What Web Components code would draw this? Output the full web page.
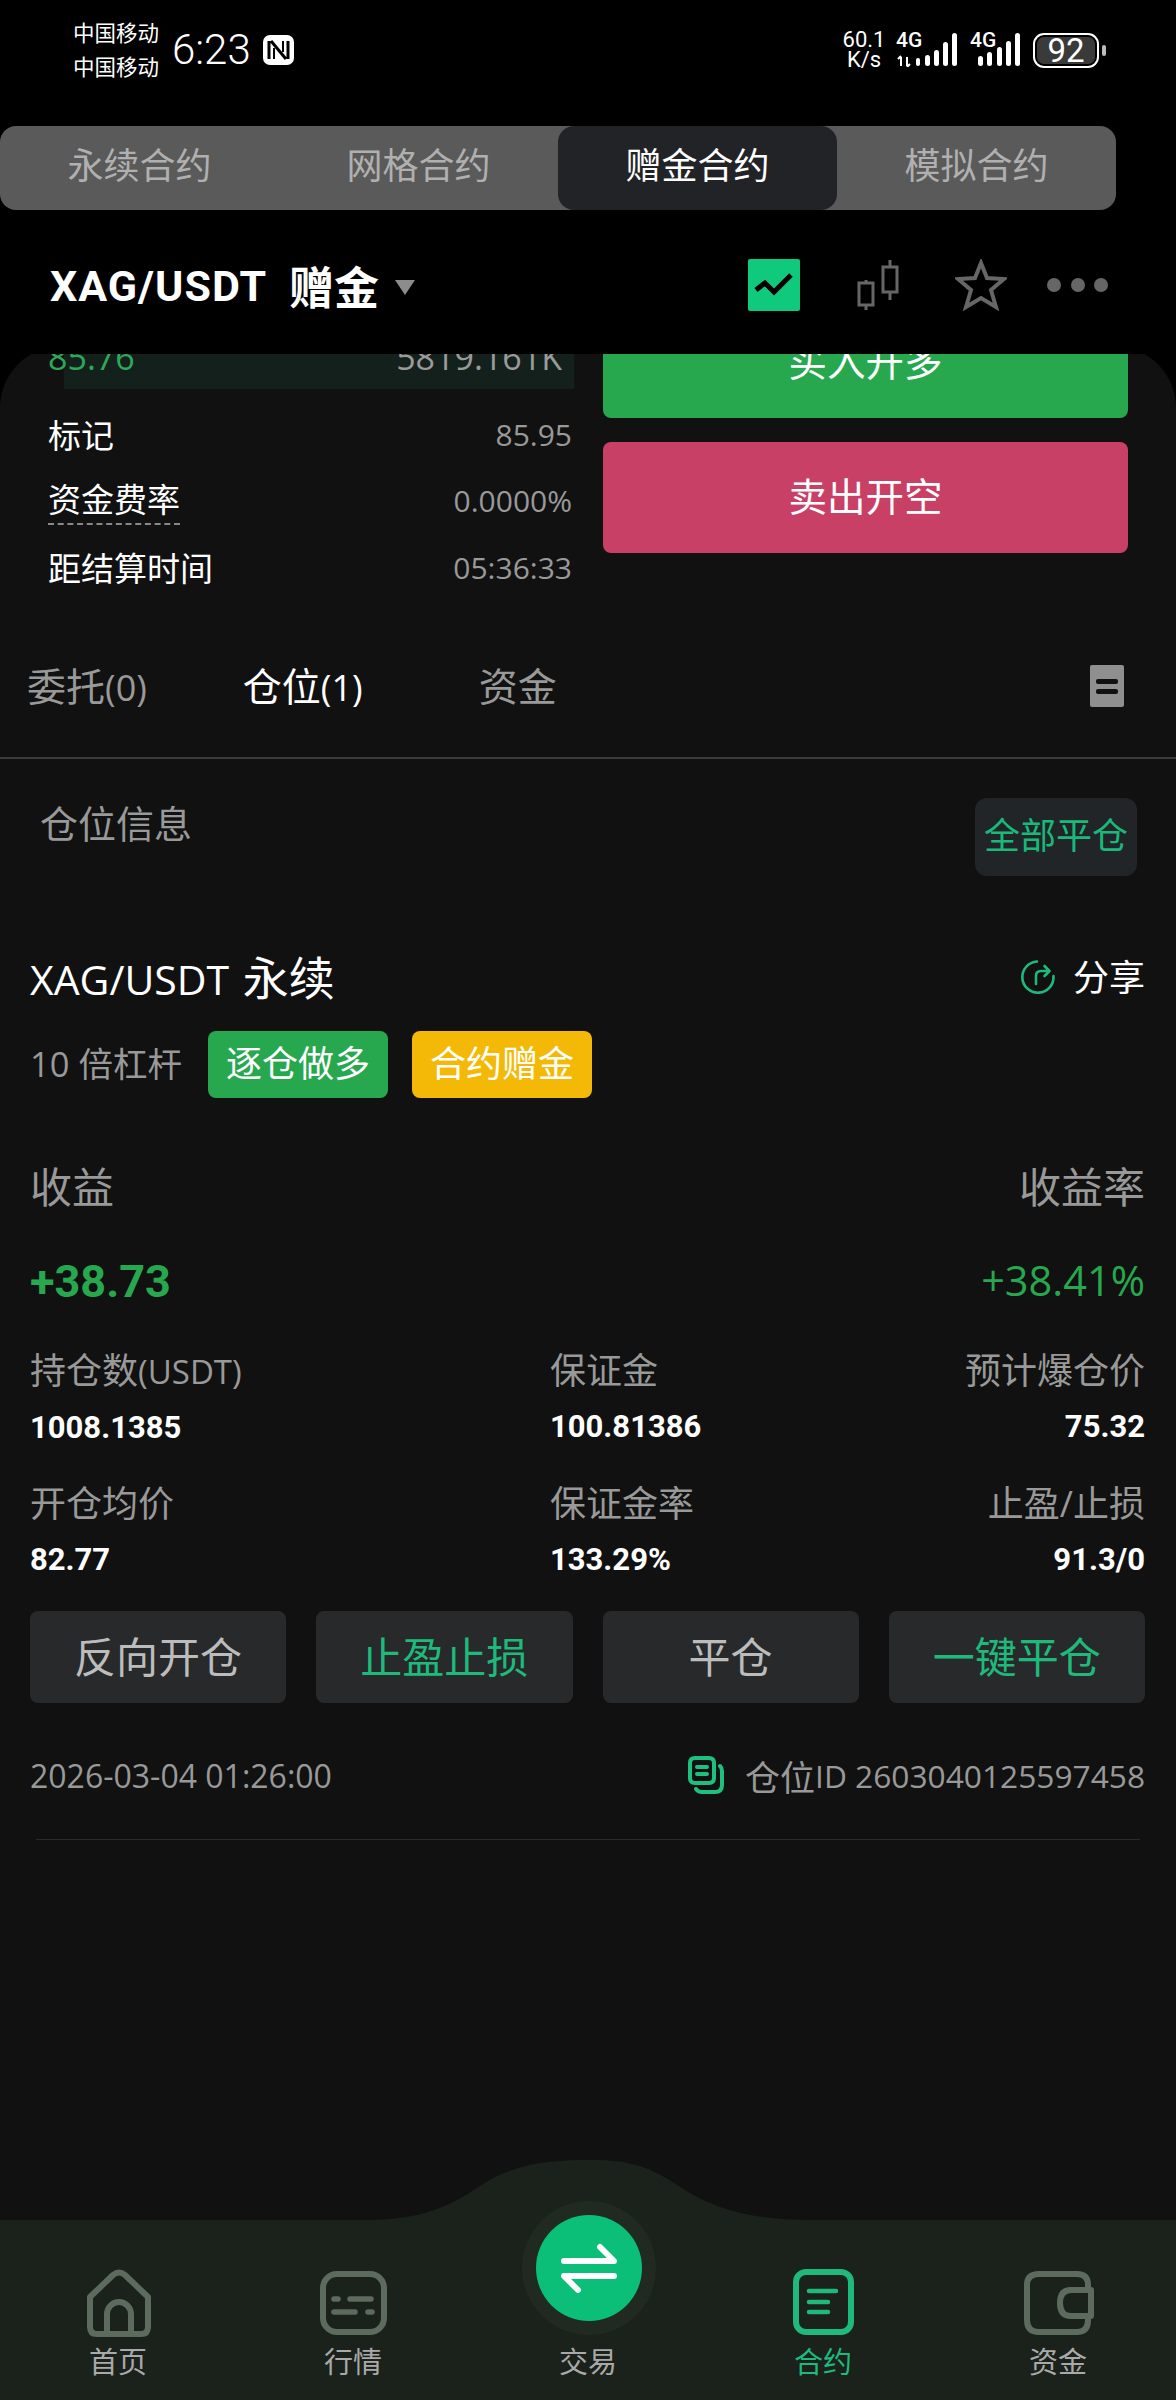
<!DOCTYPE html>
<html lang="zh-CN">
<head>
<meta charset="utf-8">
<title>XAG/USDT</title>
<style>
  html, body { margin: 0; background: #000; }
  body {
    width: 1176px; height: 2400px; overflow: hidden;
    display: flex; flex-direction: column;
    font-family: "Open Sans", "Noto Sans CJK SC", sans-serif;
    color: #fff;
  }
  position-sheet { flex: 1; min-height: 0; }
</style>
</head>
<body>
<status-bar></status-bar>
<market-tabs>
  <tab-item>永续合约</tab-item>
  <tab-item>网格合约</tab-item>
  <tab-item active>赠金合约</tab-item>
  <tab-item>模拟合约</tab-item>
</market-tabs>
<pair-header></pair-header>

<position-sheet>
  <order-panel></order-panel>
  <record-tabs></record-tabs>
  <position-card></position-card>
</position-sheet>

<bottom-nav>
  <nav-item label="首页">
    <svg slot="icon" width="69" height="70" viewBox="0 0 69 70" fill="none" stroke="#5d6a5e" stroke-width="6" stroke-linejoin="round"><path d="M6 29 L29 7 Q35 2 41 7 L64 29 V59 Q64 66 57 66 H13 Q6 66 6 59 Z"/><path d="M23 65 V46 A12 12 0 0 1 47 46 V65"/></svg>
  </nav-item>
  <nav-item label="行情">
    <svg slot="icon" width="69" height="70" viewBox="0 0 69 70" fill="none" stroke="#5d6a5e" stroke-width="6" stroke-linecap="round"><rect x="4" y="6" width="61" height="58" rx="14"/><path d="M15 31 H19 M31 31 H52 M15 44 H36 M49 44 H53" stroke-width="5.5"/></svg>
  </nav-item>
  <nav-item label="交易"><span slot="icon"></span></nav-item>
  <nav-item label="合约" active>
    <svg slot="icon" width="69" height="70" viewBox="0 0 69 70" fill="none" stroke="#1fb97c" stroke-width="6" stroke-linecap="round"><rect x="7" y="4" width="55" height="60" rx="10"/><path d="M20 23 H47 M20 34 H39 M20 44 H39" stroke-width="4.5"/></svg>
  </nav-item>
  <nav-item label="资金">
    <svg slot="icon" width="72" height="70" viewBox="0 0 72 70" fill="none" stroke="#5d6a5e" stroke-width="6" stroke-linejoin="round"><path d="M66 22 V17 Q66 6 55 6 H17 Q5 6 5 17 V52 Q5 64 17 64 H55 Q66 64 66 52 V48"/><path d="M69 22 H49 Q38 22 38 35 Q38 48 49 48 H69 Z"/></svg>
  </nav-item>
</bottom-nav>

<script>
class StatusBar extends HTMLElement {
    connectedCallback() {
        this.attachShadow({ mode: 'open' });
        this.shadowRoot.innerHTML = `
            <style>
                :host { display: block; height: 126px; background: #000; }
                .bar { height: 100px; display: flex; align-items: center; padding: 0 0 0 73px; }
                .carrier { font-size: 21.5px; line-height: 34px; width: 99px; }
                .time { font-family: Roboto, sans-serif; font-weight: 300; font-size: 42px; line-height: 50px; width: 91px; }
                .nfc { display: block; }
                .right { margin-left: auto; display: flex; align-items: center; padding-right: 70px; }
                .speed { font-family: Roboto, sans-serif; font-size: 22px; line-height: 20px; text-align: center; width: 44px; margin-right: 10px; }
                .sig { position: relative; height: 34px; }
                .sig span { position: absolute; left: 0; top: -5px; font-family: Roboto, sans-serif; font-size: 21px; font-weight: 500; line-height: 25px; }
                .sig svg { display: block; }
                .battery { box-sizing: border-box; width: 66px; height: 35px; border: 2.5px solid #fff; border-radius: 11px; padding: 2px; margin-left: 13px; }
                .battery span { display: block; height: 100%; background: #3a3a3a; border-radius: 7px; text-align: center; font-family: Roboto, sans-serif; font-size: 33px; line-height: 27px; font-weight: 400; }
                .tip { width: 4px; height: 11px; background: #bbb; border-radius: 2px; margin-left: 3px; }
            </style>
            <div class="bar">
                <div class="carrier">中国移动<br>中国移动</div>
                <div class="time">6:23</div>
                <svg class="nfc" width="31" height="30" viewBox="0 0 31 30"><rect width="31" height="30" rx="7" fill="#fff"/><path d="M6 24 V6 M25 6 V24 M8 6 L23 24" fill="none" stroke="#000" stroke-width="3"/><path d="M11 13 V24 M20 6 V17" fill="none" stroke="#000" stroke-width="2"/></svg>
                <div class="right">
                    <div class="speed">60.1<br>K/s</div>
                    <div class="sig">
                        <span>4G</span>
                        <svg width="64" height="34" viewBox="0 0 64 34" fill="#fff">
                            <path d="M5 24 V33 M11 24 V33 M2 26 L5 23 M14 31 L11 34" stroke="#fff" stroke-width="2" fill="none"/>
                            <rect x="20" y="25" width="4" height="8" rx="2"/><rect x="29" y="22" width="5" height="11" rx="2.5"/><rect x="38" y="17" width="5" height="16" rx="2.5"/><rect x="47" y="9" width="5" height="24" rx="2.5"/><rect x="56" y="0" width="5" height="33" rx="2.5"/>
                        </svg>
                    </div>
                    <div class="sig" style="margin-left:10px">
                        <span>4G</span>
                        <svg width="50" height="34" viewBox="0 0 50 34" fill="#fff">
                            <rect x="8" y="23" width="5" height="10" rx="2.5"/><rect x="17" y="19" width="5" height="14" rx="2.5"/><rect x="27" y="14" width="5" height="19" rx="2.5"/><rect x="36" y="8" width="5" height="25" rx="2.5"/><rect x="45" y="0" width="5" height="33" rx="2.5"/>
                        </svg>
                    </div>
                    <div class="battery"><span>92</span></div>
                    <div class="tip"></div>
                </div>
            </div>
        `;
    }
}

class TabItem extends HTMLElement {
    connectedCallback() {
        this.attachShadow({ mode: 'open' });
        this.shadowRoot.innerHTML = `
            <style>
                :host { display: flex; align-items: center; justify-content: center; flex: 1; box-sizing: border-box; padding-bottom: 9px; font-size: 36px; color: #b0b0b0; border-radius: 16px; }
                :host([active]) { background: #222327; color: #fff; }
            </style>
            <slot></slot>
        `;
    }
}

class MarketTabs extends HTMLElement {
    connectedCallback() {
        this.attachShadow({ mode: 'open' });
        this.shadowRoot.innerHTML = `
            <style>
                :host { display: flex; width: 1116px; height: 84px; background: #5a5a5a; border-radius: 16px; }
            </style>
            <slot></slot>
        `;
    }
}

class PairHeader extends HTMLElement {
    connectedCallback() {
        this.attachShadow({ mode: 'open' });
        this.shadowRoot.innerHTML = `
            <style>
                :host { display: flex; align-items: center; height: 144px; padding: 6px 68px 0 50px; background: #000; box-sizing: border-box; position: relative; z-index: 2; }
                .name { font-family: Roboto, "Noto Sans CJK SC", sans-serif; font-weight: 700; font-size: 43px; letter-spacing: 1px; margin-top: 1px; }
                .gift { font-family: "Noto Sans CJK SC", sans-serif; font-weight: 700; font-size: 45px; margin-left: 22px; }
                .caret { width: 0; height: 0; border-left: 10px solid transparent; border-right: 10px solid transparent; border-top: 15px solid #8c8c8c; margin: 4px 0 0 16px; }
                .tools { margin-left: auto; display: flex; align-items: center; }
                svg { display: block; }
            </style>
            <div class="name">XAG/USDT</div>
            <div class="gift">赠金</div>
            <div class="caret"></div>
            <div class="tools">
                <svg width="52" height="52" viewBox="0 0 52 52"><rect width="52" height="52" rx="2" fill="#0fc97d"/><path d="M8 31 L17 24 L26 33 L43 16" fill="none" stroke="#000" stroke-width="5"/></svg>
                <svg style="margin-left:57px" width="42" height="52" viewBox="0 0 42 52" fill="none" stroke="#666" stroke-width="3"><rect x="2" y="24" width="14" height="22"/><path d="M9 21 V24 M9 46 V51"/><rect x="26" y="8" width="14" height="25"/><path d="M33 1 V8 M33 33 V41"/></svg>
                <svg style="margin-left:56px" width="52" height="52" viewBox="0 0 52 52" fill="none" stroke="#666" stroke-width="4" stroke-linejoin="miter"><path d="M26 4 L32 19 L49 20 L36 31 L41 48 L26 39 L11 48 L16 31 L3 20 L20 19 Z"/></svg>
                <svg style="margin-left:40px" width="61" height="14" viewBox="0 0 61 14" fill="#666"><circle cx="7" cy="7" r="7"/><circle cx="31" cy="7" r="7"/><circle cx="54" cy="7" r="7"/></svg>
            </div>
        `;
    }
}

class PositionSheet extends HTMLElement {
    connectedCallback() {
        this.attachShadow({ mode: 'open' });
        this.shadowRoot.innerHTML = `
            <style>
                :host { display: block; overflow: hidden; background: #000; }
                .sheet { background: #111; margin-top: -8px; height: 2000px; border-radius: 62px 62px 0 0; overflow: hidden; }
            </style>
            <div class="sheet"><slot></slot></div>
        `;
    }
}

class OrderPanel extends HTMLElement {
    connectedCallback() {
        this.attachShadow({ mode: 'open' });
        this.shadowRoot.innerHTML = `
            <style>
                :host { display: flex; height: 294px; }
                .left { width: 603px; box-sizing: border-box; flex: none; }
                .book { height: 43px; margin: 0 29px 0 64px; background: #13201c; position: relative; }
                .book span { position: absolute; top: -13px; font-size: 34px; line-height: 48px; }
                .book .p { left: -16px; color: #2ea757; }
                .book .v { right: 12px; color: #9a9a9a; }
                .row { display: flex; justify-content: space-between; align-items: center; height: 66.5px; padding: 0 31px 0 48px; font-size: 33px; }
                .row.first { margin-top: 12px; }
                .row b { font-weight: 400; }
                .row span { color: #999; font-size: 30px; }
                .dash { border-bottom: 2px dashed #888; padding-bottom: 2px; margin-top: 3px; line-height: 42px; }
                .right { width: 525px; margin-top: -38px; }
                .btn { height: 110px; box-sizing: border-box; padding-bottom: 8px; border-radius: 8px; display: flex; align-items: center; justify-content: center; font-size: 38.5px; }
                .buy { background: #27a84f; }
                .sell { background: #c94067; margin-top: 24px; height: 111px; }
            </style>
            <div class="left">
                <div class="book"><span class="p">85.76</span><span class="v">5819.161K</span></div>
                <div class="row first"><b>标记</b><span>85.95</span></div>
                <div class="row"><b class="dash">资金费率</b><span>0.0000%</span></div>
                <div class="row"><b>距结算时间</b><span>05:36:33</span></div>
            </div>
            <div class="right">
                <div class="btn buy">买入开多</div>
                <div class="btn sell">卖出开空</div>
            </div>
        `;
    }
}

class RecordTabs extends HTMLElement {
    connectedCallback() {
        this.attachShadow({ mode: 'open' });
        this.shadowRoot.innerHTML = `
            <style>
                :host { display: flex; align-items: center; height: 119px; box-sizing: border-box; border-bottom: 2px solid #3c3c3c; padding: 0 52px 30px 27px; font-size: 39px; color: #999; }
                .t small { font-size: 36px; }
                .on { color: #fff; margin-left: 96px; }
                .last { margin-left: 116px; }
                .doc { margin-left: auto; margin-top: 5px; width: 34px; height: 42px; background: #8f8f8f; border-radius: 2px; display: flex; flex-direction: column; align-items: center; justify-content: center; gap: 5px; }
                .doc i { display: block; width: 22px; height: 5px; background: #111; border-radius: 2px; }
            </style>
            <div class="t">委托<small>(0)</small></div>
            <div class="t on">仓位<small>(1)</small></div>
            <div class="t last">资金</div>
            <div class="doc"><i></i><i></i></div>
        `;
    }
}

class StatCell extends HTMLElement {
    connectedCallback() {
        this.attachShadow({ mode: 'open' });
        this.shadowRoot.innerHTML = `
            <style>
                :host { display: block; }
                :host([end]) { text-align: right; }
                .l { font-size: 36px; line-height: 44px; color: #999; }
                .v { font-family: Roboto, sans-serif; font-weight: 700; font-size: 31px; line-height: 44px; color: #fff; margin-top: 12px; }
            </style>
            <div class="l"><slot></slot></div>
            <div class="v">${this.getAttribute('value')}</div>
        `;
    }
}

class ActionButton extends HTMLElement {
    connectedCallback() {
        this.attachShadow({ mode: 'open' });
        this.shadowRoot.innerHTML = `
            <style>
                :host { display: flex; align-items: center; justify-content: center; box-sizing: border-box; height: 92px; padding-bottom: 6px; background: #27292b; border-radius: 8px; font-size: 42px; color: #bcbcbc; }
                :host([green]) { color: #1fb97c; }
            </style>
            <slot></slot>
        `;
    }
}

class PositionCard extends HTMLElement {
    connectedCallback() {
        this.attachShadow({ mode: 'open' });
        this.shadowRoot.innerHTML = `
            <style>
                :host { display: block; }
                .head { display: flex; justify-content: space-between; align-items: flex-start; padding: 39px 39px 0 40px; }
                .head .t { font-size: 38px; line-height: 50px; color: #999; }
                .all { width: 162px; height: 78px; box-sizing: border-box; padding-bottom: 8px; background: #222527; border-radius: 12px; color: #19b97c; font-size: 36px; display: flex; align-items: center; justify-content: center; }
                .body { padding: 0 31px 0 30px; }
                .title { display: flex; align-items: center; justify-content: space-between; height: 60px; margin-top: 71px; }
                .title b { font-weight: 400; font-size: 41px; padding-bottom: 5px; }
                .title b em { font-style: normal; font-size: 46px; margin-left: 3px; }
                .share { display: flex; align-items: center; gap: 17px; font-size: 36px; }
                .share span { padding-bottom: 3px; }
                .tags { display: flex; align-items: center; height: 67px; margin-top: 24px; color: #999; font-size: 34.5px; }
                .tags > span { padding-bottom: 6px; margin-right: 2px; }
                .tag { width: 180px; height: 67px; box-sizing: border-box; padding-bottom: 6px; border-radius: 8px; display: flex; align-items: center; justify-content: center; color: #fff; font-size: 36px; background: #27a84f; margin-left: 24px; }
                .tag.gold { background: #f4b906; }
                .pl { display: flex; justify-content: space-between; align-items: center; height: 60px; color: #999; font-size: 42px; }
                .pl.heads { margin-top: 59px; }
                .pl.heads span { padding-bottom: 6px; }
                .pl.nums { margin-top: 34px; color: #27a84f; font-size: 41.5px; }
                .pl.nums b { font-family: Roboto, sans-serif; font-weight: 700; font-size: 45px; }
                .pl.nums span { padding-bottom: 2px; }
                .grid { display: grid; grid-template-columns: 520px 1fr auto; row-gap: 32px; margin-top: 38px; }
                .grid small { font-size: 33px; }
                .acts { display: grid; grid-template-columns: repeat(4, 1fr); gap: 30px; margin-top: 29px; }
                .foot { display: flex; justify-content: space-between; align-items: center; height: 50px; margin-top: 47px; color: #999; font-size: 32px; }
                .id { display: flex; align-items: center; font-size: 31.7px; }
                .id em { font-style: normal; font-size: 35px; margin-left: 21px; }
                .line { height: 1px; background: #2a2a2a; margin: 39px 5px 0 6px; }
                svg { display: block; }
            </style>
            <div class="head">
                <div class="t">仓位信息</div>
                <div class="all">全部平仓</div>
            </div>
            <div class="body">
                <div class="title">
                    <b>XAG/USDT <em>永续</em></b>
                    <div class="share">
                        <svg width="36" height="36" viewBox="0 0 36 36" fill="none" stroke="#1fb97c" stroke-width="2.6" stroke-linecap="round" stroke-linejoin="round"><path d="M17 2.5 A15.6 15.6 0 1 0 33.5 17"/><path d="M16 25 V17 Q16 12 21 12 H29 M24.5 7 L29.5 12 L24.5 17"/></svg>
                        <span>分享</span>
                    </div>
                </div>
                <div class="tags">
                    <span>10 倍杠杆</span>
                    <div class="tag">逐仓做多</div>
                    <div class="tag gold">合约赠金</div>
                </div>
                <div class="pl heads"><span>收益</span><span>收益率</span></div>
                <div class="pl nums"><b>+38.73</b><span>+38.41%</span></div>
                <div class="grid">
                    <stat-cell value="1008.1385">持仓数<small>(USDT)</small></stat-cell>
                    <stat-cell value="100.81386">保证金</stat-cell>
                    <stat-cell end value="75.32">预计爆仓价</stat-cell>
                    <stat-cell value="82.77">开仓均价</stat-cell>
                    <stat-cell value="133.29%">保证金率</stat-cell>
                    <stat-cell end value="91.3/0">止盈/止损</stat-cell>
                </div>
                <div class="acts">
                    <action-button>反向开仓</action-button>
                    <action-button green>止盈止损</action-button>
                    <action-button>平仓</action-button>
                    <action-button green>一键平仓</action-button>
                </div>
                <div class="foot">
                    <span>2026-03-04 01:26:00</span>
                    <div class="id">
                        <svg width="36" height="38" viewBox="0 0 36 38" fill="none" stroke="#1fc07f" stroke-width="4" stroke-linecap="round"><path d="M8 27 H7 Q2 27 2 22 V7 Q2 2 7 2 H21 Q26 2 26 7 V22 Q26 27 21 27 H8"/><path d="M9 11 H19 M9 18 H19"/><path d="M32 10 Q34 12 34 15 V29 Q34 36 27 36 H14 Q10 36 8 33"/></svg>
                        <em>仓位</em>ID 2603040125597458
                    </div>
                </div>
                <div class="line"></div>
            </div>
        `;
    }
}

class NavItem extends HTMLElement {
    connectedCallback() {
        this.attachShadow({ mode: 'open' });
        this.shadowRoot.innerHTML = `
            <style>
                :host { display: flex; flex-direction: column; align-items: center; flex: none; width: 235px; color: #a9a9a9; font-size: 29px; }
                :host([active]) { color: #1fb97c; }
                .icon { height: 72px; display: flex; align-items: center; justify-content: center; }
                .label { line-height: 40px; margin-top: 3px; }
            </style>
            <div class="icon"><slot name="icon"></slot></div>
            <div class="label">${this.getAttribute('label')}</div>
        `;
    }
}

class BottomNav extends HTMLElement {
    connectedCallback() {
        this.attachShadow({ mode: 'open' });
        this.shadowRoot.innerHTML = `
            <style>
                :host { display: block; position: relative; height: 180px; background: #1b211b; z-index: 3; }
                .bump { position: absolute; left: 340px; top: -60px; display: block; }
                .row { display: flex; padding: 47px 0 0 0; justify-content: center; position: relative; }
                .halo { position: absolute; left: 522px; top: -19px; width: 134px; height: 134px; border-radius: 50%; background: #202a20; display: flex; align-items: center; justify-content: center; }
                .disc { width: 106px; height: 106px; border-radius: 50%; background: #0cbf78; display: flex; align-items: center; justify-content: center; }
            </style>
            <svg class="bump" width="500" height="61" viewBox="0 0 500 61"><path d="M0 61 V60 H25 C75 60 105 50 140 26 C175 2 215 0 250 0 C290 0 310 6 345 30 C380 52 420 60 470 60 H500 V61 Z" fill="#1b211b"/></svg>
            <div class="row"><slot></slot></div>
            <div class="halo"><div class="disc">
                <svg width="56" height="50" viewBox="0 0 56 50" fill="none" stroke="#fff" stroke-width="6" stroke-linecap="round" stroke-linejoin="round"><path d="M3 18 H53 L39 4"/><path d="M53 33 H3 L17 47"/></svg>
            </div></div>
        `;
    }
}

customElements.define('status-bar', StatusBar);
customElements.define('tab-item', TabItem);
customElements.define('market-tabs', MarketTabs);
customElements.define('pair-header', PairHeader);
customElements.define('position-sheet', PositionSheet);
customElements.define('order-panel', OrderPanel);
customElements.define('record-tabs', RecordTabs);
customElements.define('stat-cell', StatCell);
customElements.define('action-button', ActionButton);
customElements.define('position-card', PositionCard);
customElements.define('nav-item', NavItem);
customElements.define('bottom-nav', BottomNav);
</script>
</body>
</html>
